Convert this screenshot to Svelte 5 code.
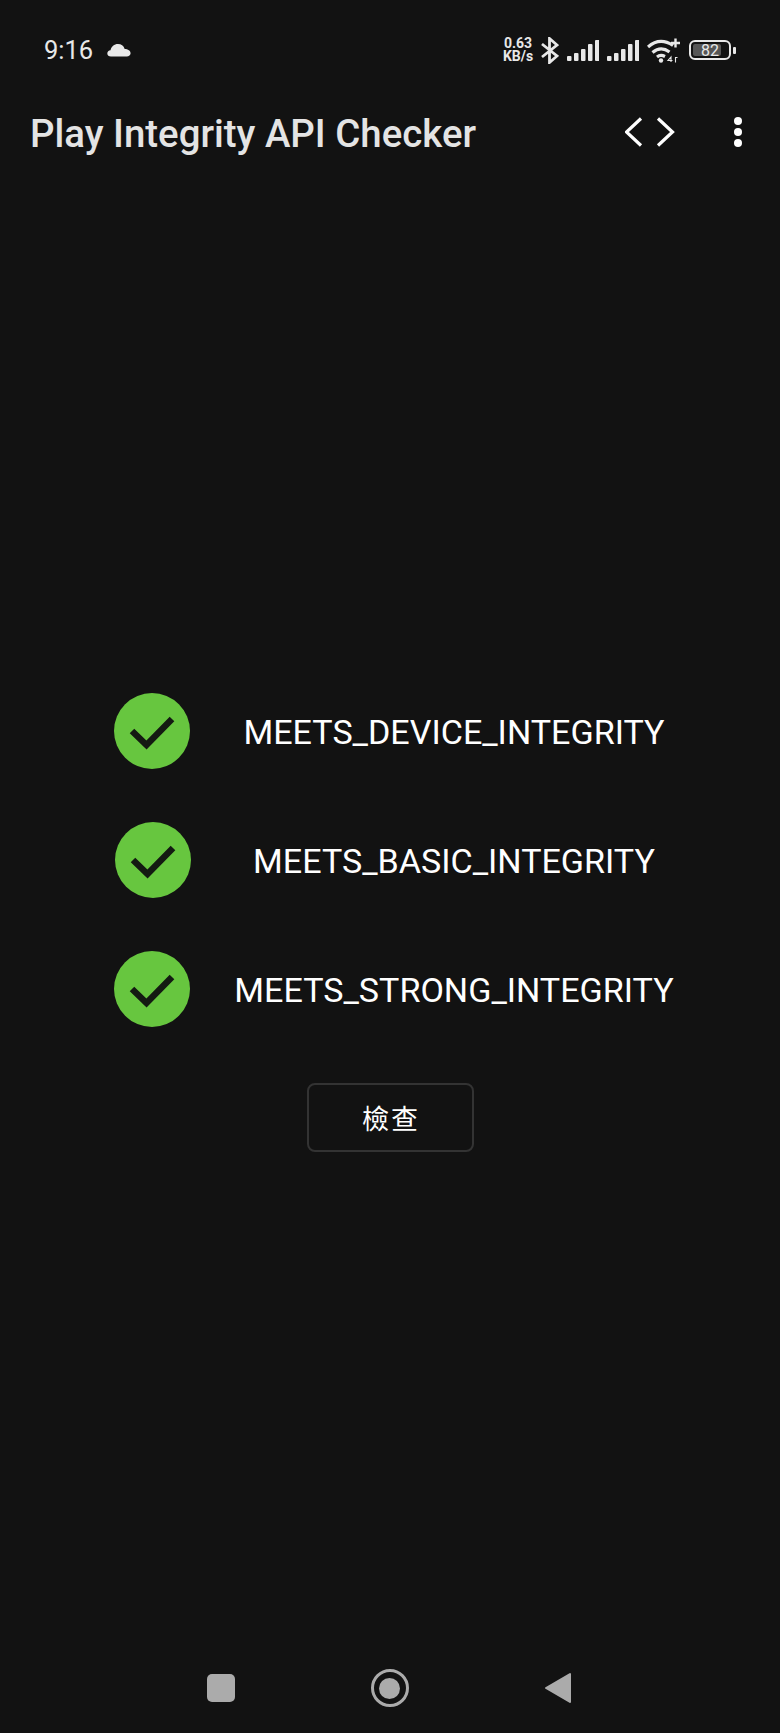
<script>
  const checks = [
    { label: 'MEETS_DEVICE_INTEGRITY', nudge: 0 },
    { label: 'MEETS_BASIC_INTEGRITY', nudge: 1 },
    { label: 'MEETS_STRONG_INTEGRITY', nudge: 0 },
  ];
  const bars = [5, 8, 12, 17, 21];
</script>

{#snippet signal()}
  <svg class="signal" width="32" height="24" viewBox="0 0 32 24" fill="#e8e8e8">
    {#each bars as h, i}
      <rect x={i * 7} y={23 - h} width="4.500" height={h} rx="1" />
    {/each}
  </svg>
{/snippet}

<div class="screen">
  <div class="status">
    <div class="status-left">
      <span class="time">9:16</span>
      <svg width="24" height="14" viewBox="0 0 24 14" fill="#e8e8e8">
        <path d="M4 13.500C1.800 13.500 .3 12.200 .3 10.400c0-1.700 1.300-3 3.200-3.200C4.200 3.600 7.200 1 11 1c3.200 0 5.700 1.900 6.700 4.900 3.200.1 5.900 1.700 5.900 4.400 0 2-1.700 3.200-3.800 3.200z" />
      </svg>
    </div>
    <div class="status-right">
      <div class="speed"><span>0.63</span><span>KB/s</span></div>
      <svg width="18" height="27" viewBox="0 0 18 27" fill="none" stroke="#e8e8e8" stroke-width="2.800">
        <path d="M1 7 16 19 8.500 25.500V1.500L16 8 1 20" />
      </svg>
      {@render signal()}
      {@render signal()}
      <svg class="wifi" width="34" height="26" viewBox="0 0 34 26" fill="none" stroke="#e8e8e8" stroke-width="3.200">
        <path d="M1 10C9 3 17 2.500 26 8.500" />
        <path d="M5.500 15.500C11 11 17 11 22.500 15" />
        <path d="M10 20C12.500 18 15 18 18 19.500" />
        <circle cx="14" cy="23.500" r="2.200" fill="#e8e8e8" stroke="none" />
        <path d="M28.500 1.500v9M24 6h9" stroke-width="2.400" />
        <path d="M24 25v-5l-3 3.500h4.500M28.500 25.500v-5h2" stroke-width="1.100" />
      </svg>
      <div class="battery">
        <div class="cell"><div class="level"></div><span>82</span></div>
        <div class="nub"></div>
      </div>
    </div>
  </div>

  <header class="appbar">
    <h1>Play Integrity API Checker</h1>
    <svg class="code" width="50" height="30" viewBox="0 0 50 30" fill="none" stroke="#fff" stroke-width="3.200">
      <path d="M16 1.500 1.500 15 16 28.500" />
      <path d="M33 1.500 47.500 15 33 28.500" />
    </svg>
    <div class="menu"><i></i><i></i><i></i></div>
  </header>

  <main>
    <div class="checks">
      {#each checks as check}
        <div class="check">
          <svg class="tick" style="margin-left: {check.nudge}px" width="76" height="76" viewBox="0 0 76 76">
            <circle cx="38" cy="38" r="38" fill="#67c63f" />
            <path d="M18 38 32.500 52 58 26" fill="none" stroke="#141a12" stroke-width="6.500" />
          </svg>
          <span class="label">{check.label}</span>
        </div>
      {/each}
    </div>
    <button>檢查</button>
  </main>

  <nav>
    <div class="recent"></div>
    <div class="home"><div></div></div>
    <svg width="28" height="32" viewBox="0 0 28 32" fill="#ababab" stroke="#ababab" stroke-width="2" stroke-linejoin="round">
      <path d="M2 16 26 2V30Z" />
    </svg>
  </nav>
</div>

<style>
  :global(body) {
    margin: 0;
    background: #121212;
  }

  .screen {
    width: 780px;
    height: 1733px;
    display: flex;
    flex-direction: column;
    background: #121212;
    color: #fff;
    font-family: Roboto, "Noto Sans CJK TC", sans-serif;
    overflow: hidden;
  }

  .status {
    height: 100px;
    box-sizing: border-box;
    padding: 0 44px;
    display: flex;
    justify-content: space-between;
    align-items: center;
  }
  .status-left {
    display: flex;
    align-items: center;
    gap: 14px;
  }
  .time {
    font-size: 25.500px;
    color: #e8e8e8;
  }
  .status-right {
    display: flex;
    align-items: center;
    gap: 8px;
  }
  .speed {
    width: 30px;
    display: flex;
    flex-direction: column;
    align-items: center;
    font-size: 14px;
    font-weight: 700;
    line-height: 13px;
    color: #e8e8e8;
  }
  .battery {
    display: flex;
    align-items: center;
    gap: 2px;
  }
  .cell {
    position: relative;
    width: 42px;
    height: 20px;
    box-sizing: border-box;
    border: 2px solid #e8e8e8;
    border-radius: 6px;
    display: flex;
    align-items: center;
    justify-content: center;
    font-size: 16px;
    color: #e8e8e8;
  }
  .level {
    position: absolute;
    left: 2px;
    top: 2px;
    bottom: 2px;
    width: 28px;
    background: #555;
    border-radius: 2px;
  }
  .cell span {
    position: relative;
  }
  .nub {
    width: 3px;
    height: 7px;
    background: #e8e8e8;
    border-radius: 1px;
  }

  .appbar {
    height: 66px;
    padding: 0 38px 0 30px;
    display: flex;
    align-items: center;
  }
  h1 {
    flex: 1;
    margin: 0;
    font-size: 38.400px;
    font-weight: 500;
    color: #e4e4e4;
  }
  .code {
    margin-right: 59px;
    margin-top: -2px;
  }
  .menu {
    display: flex;
    flex-direction: column;
    gap: 3.300px;
    margin-top: -2px;
  }
  .menu i {
    display: block;
    width: 8px;
    height: 8px;
    border-radius: 50%;
    background: #fff;
  }

  main {
    flex: 1;
    padding-top: 527px;
    display: flex;
    flex-direction: column;
    align-items: center;
  }
  .checks {
    width: 100%;
    display: flex;
    flex-direction: column;
    gap: 52.800px;
  }
  .check {
    position: relative;
    display: flex;
    align-items: center;
    padding-left: 113.500px;
    height: 76px;
  }
  .tick {
    display: block;
  }
  .label {
    position: absolute;
    left: 454px;
    transform: translate(-50%, 1px);
    font-size: 34.100px;
    white-space: nowrap;
  }

  button {
    margin-top: 56.400px;
    width: 167px;
    height: 69px;
    padding: 0 0 0 2px;
    background: transparent;
    border: 2px solid #333;
    border-radius: 8px;
    color: #fff;
    font-family: inherit;
    font-size: 27px;
    letter-spacing: 2px;
  }

  nav {
    height: 61px;
    box-sizing: border-box;
    padding: 0 208px 0 207px;
    display: flex;
    justify-content: space-between;
    align-items: flex-start;
  }
  .recent {
    width: 28px;
    height: 28px;
    margin-top: 2px;
    background: #ababab;
    border-radius: 5px;
  }
  .home {
    width: 38px;
    height: 38px;
    margin-top: -3px;
    box-sizing: border-box;
    border: 3px solid #ababab;
    border-radius: 50%;
    display: flex;
    align-items: center;
    justify-content: center;
  }
  .home div {
    width: 21px;
    height: 21px;
    border-radius: 50%;
    background: #ababab;
  }
</style>
